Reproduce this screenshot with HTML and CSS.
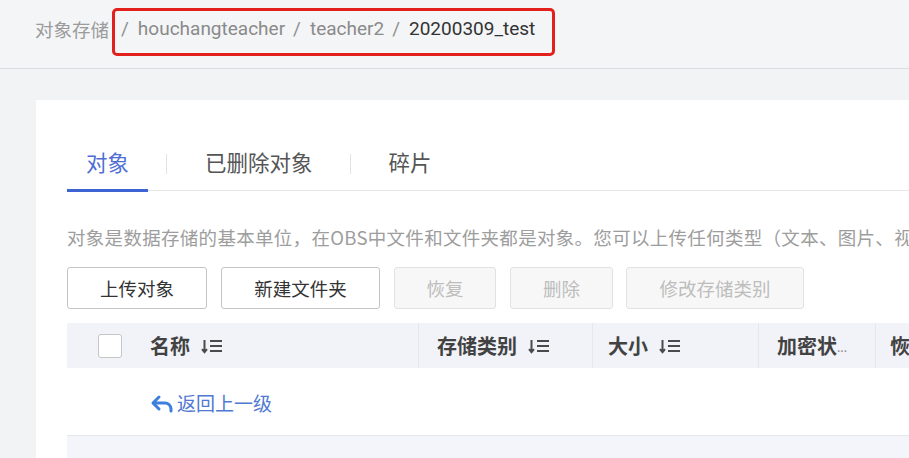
FILE: index.html
```html
<!DOCTYPE html>
<html lang="zh-CN">
<head>
<meta charset="utf-8">
<title>对象存储</title>
<link rel="stylesheet" href="styles.css">
</head>
<body>
<header class="topbar">
  <span class="crumb-root">对象存储</span>
  <span class="crumb-box">
    <span class="sep">/</span><span class="crumb">houchangteacher</span><span class="sep">/</span><span class="crumb">teacher2</span><span class="sep">/</span><span class="crumb current">20200309_test</span>
  </span>
</header>
<main class="main">
  <section class="card">
    <nav class="tabs">
      <span class="tab active">对象</span>
      <span class="tab-sep"></span>
      <span class="tab">已删除对象</span>
      <span class="tab-sep"></span>
      <span class="tab">碎片</span>
    </nav>
    <p class="desc">对象是数据存储的基本单位，在OBS中文件和文件夹都是对象。您可以上传任何类型（文本、图片、视频等）的文件。</p>
    <div class="toolbar">
      <button class="btn w-upload">上传对象</button>
      <button class="btn w-folder">新建文件夹</button>
      <button class="btn disabled w-restore">恢复</button>
      <button class="btn disabled w-delete">删除</button>
      <button class="btn disabled w-modify">修改存储类别</button>
    </div>
    <div class="table">
      <div class="thead">
        <div class="cell c-check"><span class="checkbox"></span></div>
        <div class="cell c-name">名称
          <svg class="sort" width="22" height="20" viewBox="0 0 22 20"><path d="M3.5 4v12M1 13.2 3.5 16.2 6 13.2" fill="none" stroke="#4a4a4a" stroke-width="2"/><path d="M9 5h12M9 10h12M9 15h12" stroke="#4a4a4a" stroke-width="2.2"/></svg>
        </div>
        <div class="cell c-class">存储类别
          <svg class="sort" width="22" height="20" viewBox="0 0 22 20"><path d="M3.5 4v12M1 13.2 3.5 16.2 6 13.2" fill="none" stroke="#4a4a4a" stroke-width="2"/><path d="M9 5h12M9 10h12M9 15h12" stroke="#4a4a4a" stroke-width="2.2"/></svg>
        </div>
        <div class="cell c-size">大小
          <svg class="sort" width="22" height="20" viewBox="0 0 22 20"><path d="M3.5 4v12M1 13.2 3.5 16.2 6 13.2" fill="none" stroke="#4a4a4a" stroke-width="2"/><path d="M9 5h12M9 10h12M9 15h12" stroke="#4a4a4a" stroke-width="2.2"/></svg>
        </div>
        <div class="cell c-enc">加密状<span class="dots">...</span></div>
        <div class="cell c-rest">恢复状态</div>
      </div>
      <div class="row back-row">
        <div class="cell c-check"></div>
        <div class="cell c-name">
          <a class="back">
            <svg width="24" height="20" viewBox="0 0 24 20"><path d="M9 4 3 10 9 16" fill="none" stroke="#3d7fdc" stroke-width="3" stroke-linecap="round" stroke-linejoin="round"/><path d="M3.5 10H15a6 6 0 0 1 6 6v2" fill="none" stroke="#3d7fdc" stroke-width="3" stroke-linecap="round"/></svg>
            返回上一级
          </a>
        </div>
      </div>
      <div class="row alt">
        <div class="cell c-check"><span class="checkbox gray"></span></div>
      </div>
    </div>
  </section>
</main>
</body>
</html>
```
FILE: styles.css
```css
* { box-sizing: border-box; }
html, body { margin: 0; padding: 0; }
body {
  width: 909px;
  height: 458px;
  overflow: hidden;
  background: #f2f3f5;
  font-family: "Noto Sans CJK SC", Roboto, "Noto Sans", sans-serif;
  color: #333;
}
.topbar {
  height: 69px;
  border-bottom: 1px solid #dcdde0;
  display: flex;
  align-items: flex-start;
  padding: 8px 0 0 35px;
  font-size: 18px;
  line-height: 24px;
  background: #f4f5f7;
}
.crumb-root {
  color: #9b9b9b;
  margin-top: 9px;
  font-size: 18.5px;
}
.crumb-box {
  display: flex;
  margin-left: 3px;
  height: 48px;
  border: 3px solid #e3211c;
  border-radius: 5px;
  padding: 6px 17px 0 2px;
  font-family: Roboto, "Noto Sans CJK SC", sans-serif;
  font-size: 19px;
  color: #8d8d8d;
}
.crumb-box .sep { margin: 0 9px 0 4px; color: #909090; }
.crumb-box .crumb { color: #8a8a8a; }
.crumb-box .crumb.current { color: #333; }
.crumb-box .crumb + .sep { margin-left: 8px; }

.main {
  padding: 31px 0 0 36px;
}
.card {
  background: #fff;
  width: 900px;
  height: 400px;
  padding: 38px 0 0 31px;
}
.tabs {
  display: flex;
  align-items: center;
  border-bottom: 1px solid #e6e7ea;
  height: 53px;
}
.tab {
  font-size: 21.5px;
  line-height: 24px;
  color: #555;
  padding: 0 19px 5px;
  height: 52px;
  display: flex;
  align-items: center;
  border-bottom: 3px solid transparent;
  margin-top: 3px;
  flex-shrink: 0;
}
.tab.active {
  color: #4e6ed4;
  border-bottom-color: #3e63d3;
}
.tab-sep {
  width: 1px;
  height: 20px;
  background: #e3e3e3;
  margin: 0 19px 0 18px;
  flex-shrink: 0;
}
.desc {
  margin: 34px 0 0;
  font-size: 18.5px;
  letter-spacing: 0.3px;
  line-height: 24px;
  color: #9d9d9d;
  white-space: nowrap;
}
.toolbar {
  display: flex;
  margin-top: 18px;
}
.btn {
  height: 42px;
  margin-right: 14px;
  font-family: "Noto Sans CJK SC", sans-serif;
  font-size: 18.5px;
  color: #333;
  background: #fff;
  border: 1px solid #c4c4c4;
  border-radius: 3px;
  padding: 0;
  flex-shrink: 0;
}
.btn.disabled {
  color: #bdbdbd;
  background: #f7f7f7;
  border-color: #e2e2e2;
}
.w-upload { width: 140px; }
.w-folder { width: 159px; }
.w-restore { width: 102px; }
.w-delete { width: 103px; margin-right: 13px; }
.w-modify { width: 178px; }

.table { margin-top: 14px; }
.thead, .row {
  display: flex;
  align-items: center;
}
.thead {
  height: 45px;
  background: #f1f3f8;
  font-size: 20px;
  font-weight: 700;
  color: #424242;
}
.cell {
  height: 100%;
  display: flex;
  align-items: center;
  flex-shrink: 0;
  white-space: nowrap;
}
.thead .cell + .cell:not(.c-name) { border-left: 1px solid #e4e7ee; }
.c-check { width: 83px; padding-left: 31px; }
.c-name { width: 268px; }
.c-class { width: 174px; padding-left: 18px; }
.c-size { width: 166px; padding-left: 15px; }
.c-enc { width: 117px; padding-left: 18px; }
.c-rest { width: 120px; padding-left: 14px; }
.dots { font-size: 12px; color: #888; font-weight: 400; align-self: flex-end; margin-bottom: 13px; }
.sort { margin-left: 11px; }
.checkbox {
  width: 24px;
  height: 24px;
  border: 1px solid #c6c6c6;
  border-radius: 3px;
  background: #fff;
}
.checkbox.gray { background: #e9e9ea; border-color: #dedede; margin-top: 40px; }
.row {
  height: 68px;
  border-bottom: 1px solid #e4e6eb;
  background: #fff;
}
.row.alt {
  background: #f3f5fa;
  border-bottom: none;
  height: 40px;
  align-items: flex-start;
}
.back {
  display: flex;
  align-items: center;
  gap: 3px;
  font-size: 19px;
  color: #4f79d2;
  margin-top: 2px;
}
```
